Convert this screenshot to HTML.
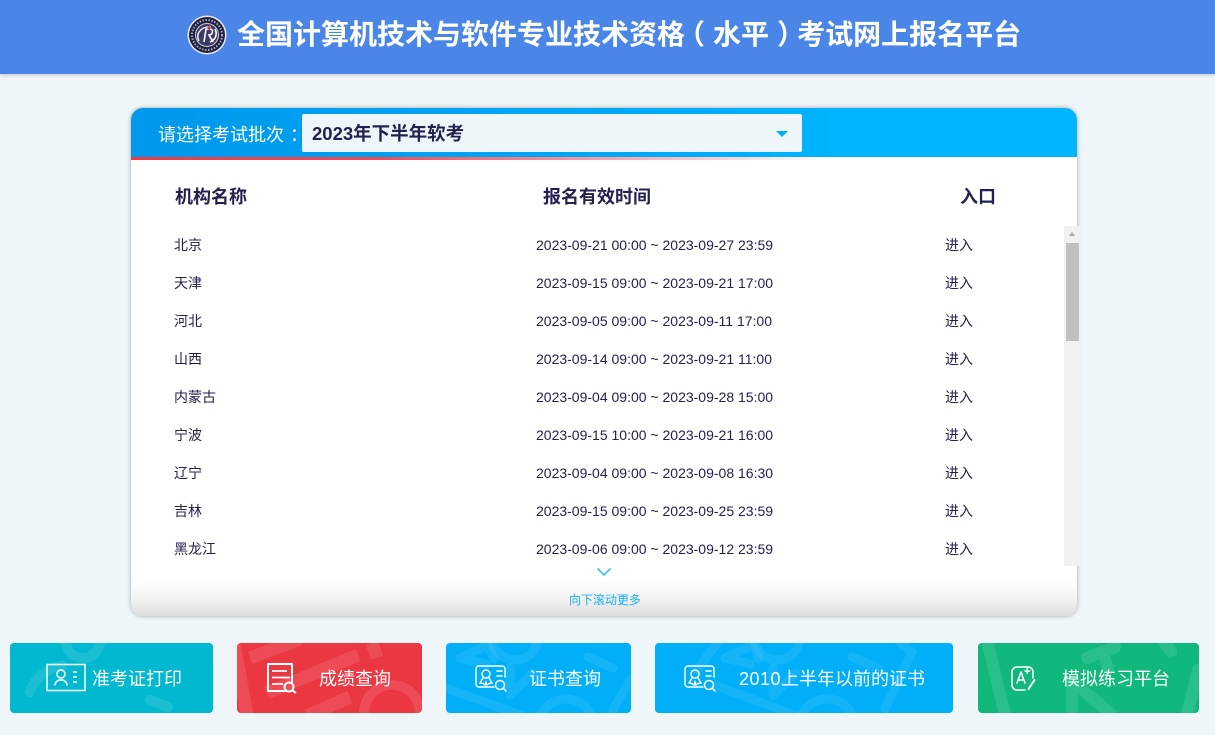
<!DOCTYPE html>
<html lang="zh-CN"><head><meta charset="utf-8"><title>全国计算机技术与软件专业技术资格(水平)考试网上报名平台</title>
<style>
*{box-sizing:border-box;margin:0;padding:0}
html,body{width:1215px;height:735px;overflow:hidden;background:#eff6f9;font-family:"Liberation Sans","Noto Sans CJK SC",sans-serif;color:#22214f}
#top{position:absolute;left:0;top:0;width:1215px;height:74px;background:#4a86e8;box-shadow:0 1px 4px rgba(0,0,0,.2)}
#title{position:absolute;left:237px;top:15px;font-size:28px;line-height:40px;font-weight:700;color:#fff;white-space:nowrap}
#title em,#lab em{font-style:normal;position:relative}
#card{position:absolute;left:131px;top:108px;width:946px;height:508px;background:#fff;border-radius:12px;box-shadow:0 0 4px rgba(0,0,0,.35);overflow:hidden}
#hd{position:absolute;left:0;top:0;width:946px;height:49px;background:linear-gradient(90deg,#0098ec 0,#00a8f6 50%,#00b4ff 75%,#00b4ff 100%)}
#red{position:absolute;left:0;top:49px;width:700px;height:3px;background:linear-gradient(90deg,#ec3a48 0,#ee4a58 35%,rgba(240,110,125,.8) 60%,rgba(255,255,255,0) 100%)}
#lab{position:absolute;left:27px;top:13px;font-size:18px;line-height:28px;color:#fff;white-space:nowrap}
#sel{position:absolute;left:171px;top:6px;width:500px;height:38px;background:#eef6f9;border-radius:2px}
#sel b{position:absolute;left:10px;top:6px;font-size:18.500px;line-height:28px;color:#22214f;white-space:nowrap}
#sel i{position:absolute;left:474px;top:17px;width:0;height:0;border-left:6px solid transparent;border-right:6px solid transparent;border-top:6px solid #00aef5}
.th{position:absolute;top:74px;font-size:18px;line-height:30px;font-weight:700;color:#22214f;white-space:nowrap}
.r{position:absolute;font-size:14px;line-height:20px;white-space:nowrap;color:#22214f}
.n{left:43px}.d{left:405px}.e{left:814px}
#fade{position:absolute;left:0;top:458px;width:946px;height:50px;background:linear-gradient(180deg,#fff 0,#fff 25%,#f3f3f3 65%,#dcdcdc 100%)}
#more{position:absolute;left:438px;top:483px;font-size:12px;line-height:18px;color:#18aef5;white-space:nowrap}
#sb{position:absolute;left:1064px;top:226px;width:17px;height:340px;background:#f1f1f1}
#sb u{position:absolute;left:2px;top:17px;width:13px;height:98px;background:#c0c0c0}
#sb s{position:absolute;left:5px;top:6px;width:0;height:0;border-left:3.500px solid transparent;border-right:3.500px solid transparent;border-bottom:4px solid #a5a5a5}
.b{position:absolute;top:643px;height:70px;border-radius:4px;overflow:hidden;color:#fff}
.b svg{position:absolute;left:0;top:0}
.b span{position:absolute;top:21px;font-size:18px;line-height:30px;color:#fff;white-space:nowrap;font-weight:400}
</style></head><body>
<div id="top">
<svg style="position:absolute;left:187px;top:15px" width="40" height="40" viewBox="0 0 40 40"><circle cx="20" cy="20" r="19.500" fill="#e9e9f0"/><circle cx="20" cy="20" r="18" fill="#20203f"/><circle cx="20" cy="20" r="11.500" fill="#3b3b68" stroke="#cfd0dd" stroke-width="1"/><path d="M12 26C8 18 15 11 24 12" fill="none" stroke="#fff" stroke-width="1.300"/><path d="M17 27l2-13h4c4 0 3 6-1 6l4 7M28 14c3 6 0 11-5 13" fill="none" stroke="#fff" stroke-width="1.600"/><path d="M20 13l2-2 2 2-2 2z" fill="#d93040"/><circle cx="20" cy="20" r="15" fill="none" stroke="#aab" stroke-width="2" stroke-dasharray="1.500 1.500"/></svg>
<div id="title">全国计算机技术与软件专业技术资格<em style="left:-8px">（</em>水平<em style="left:8px">）</em>考试网上报名平台</div>
</div>
<div id="card">
<div id="hd"></div><div id="red"></div>
<div id="lab">请选择考试批次<em style="left:6px">：</em></div>
<div id="sel"><b>2023年下半年软考</b><i></i></div>
<div class="th" style="left:44px">机构名称</div><div class="th" style="left:412px">报名有效时间</div><div class="th" style="left:829px">入口</div>
<div class="r n" style="top:127px">北京</div><div class="r d" style="top:127px">2023-09-21 00:00 ~ 2023-09-27 23:59</div><div class="r e" style="top:127px">进入</div>
<div class="r n" style="top:165px">天津</div><div class="r d" style="top:165px">2023-09-15 09:00 ~ 2023-09-21 17:00</div><div class="r e" style="top:165px">进入</div>
<div class="r n" style="top:203px">河北</div><div class="r d" style="top:203px">2023-09-05 09:00 ~ 2023-09-11 17:00</div><div class="r e" style="top:203px">进入</div>
<div class="r n" style="top:241px">山西</div><div class="r d" style="top:241px">2023-09-14 09:00 ~ 2023-09-21 11:00</div><div class="r e" style="top:241px">进入</div>
<div class="r n" style="top:279px">内蒙古</div><div class="r d" style="top:279px">2023-09-04 09:00 ~ 2023-09-28 15:00</div><div class="r e" style="top:279px">进入</div>
<div class="r n" style="top:317px">宁波</div><div class="r d" style="top:317px">2023-09-15 10:00 ~ 2023-09-21 16:00</div><div class="r e" style="top:317px">进入</div>
<div class="r n" style="top:355px">辽宁</div><div class="r d" style="top:355px">2023-09-04 09:00 ~ 2023-09-08 16:30</div><div class="r e" style="top:355px">进入</div>
<div class="r n" style="top:393px">吉林</div><div class="r d" style="top:393px">2023-09-15 09:00 ~ 2023-09-25 23:59</div><div class="r e" style="top:393px">进入</div>
<div class="r n" style="top:431px">黑龙江</div><div class="r d" style="top:431px">2023-09-06 09:00 ~ 2023-09-12 23:59</div><div class="r e" style="top:431px">进入</div>
<div id="fade"></div>
<svg style="position:absolute;left:465px;top:459px" width="16" height="11" viewBox="0 0 16 11"><path d="M1.500 1.500L8 8l6.500-6.500" fill="none" stroke="#3cc0f8" stroke-width="1.600"/></svg>
<div id="more">向下滚动更多</div>
</div>
<div id="sb"><s></s><u></u></div>
<div style="position:absolute;left:130px;top:626px;width:950px;height:1px;background:#f3f6f7"></div>

<div class="b" style="left:10px;width:203px;background:#00b8d0">
<svg width="203" height="70" fill="none" stroke="#fff" stroke-opacity=".1" stroke-linecap="round" stroke-width="10"><circle cx="73" cy="-2" r="17"/><path d="M20 49C24 36 36 26 52 22M140 57l18 7"/></svg>
<svg width="203" height="70" fill="none" stroke="#fff" stroke-opacity=".92"><rect x="37" y="21.500" width="38" height="26" stroke-width="1.600"/><circle cx="51" cy="31" r="4" stroke-width="1.700"/><path d="M45 42.500c0-7.500 12-7.500 12 0" stroke-width="1.700"/><path d="M63 29h4M63 34h4M63 39h4" stroke-width="1.800"/></svg>
<span style="left:82px">准考证打印</span></div>

<div class="b" style="left:237px;width:185px;background:#eb3742">
<svg width="185" height="70" fill="none" stroke="#fff" stroke-opacity=".1" stroke-width="13"><path d="M13 15L63 -4M30 50L121 12M70 73L113 54M-3 0L10 72M135 0l5 15"/><circle cx="155" cy="70" r="28" stroke-width="10"/></svg>
<svg width="185" height="70" fill="none" stroke="#fff"><path d="M50 48H31V21h24v19" stroke-width="2" stroke-linejoin="round"/><path d="M35 28h15M35 34.500h18M35 41h11" stroke-width="1.800"/><circle cx="52" cy="44" r="4.500" stroke-width="2"/><path d="M55.500 47.500L59 50" stroke-width="2"/></svg>
<span style="left:82px">成绩查询</span></div>

<div class="b" style="left:446px;width:185px;background:#00aff8">
<svg width="185" height="70" fill="none" stroke="#fff" stroke-opacity=".08" stroke-width="9" stroke-linejoin="round" stroke-linecap="round"><circle cx="69" cy="-6" r="23"/><path d="M14 15L42 2M42 2l6 14M14 15l26 6M64 25v27L87 30M0 45l77 28M142 14l25 11M167 67l17-30"/><circle cx="120" cy="84" r="28"/></svg>
<svg width="185" height="70" fill="none" stroke="#fff" stroke-width="1.400" stroke-linecap="round"><path d="M48 44H33a3 3 0 0 1-3-3V26a3 3 0 0 1 3-3h23a3 3 0 0 1 3 3v8"/><circle cx="40" cy="31" r="4"/><path d="M37 35l-3 5 3 .5 2 1.500 1-3 1 3 2-1.500 3-.5-3-5M51 28h5M51 33h5"/><circle cx="54" cy="42" r="4.500" stroke-width="1.500"/><path d="M57 45l3 3" stroke-width="1.500"/></svg>
<span style="left:83px">证书查询</span></div>

<div class="b" style="left:655px;width:298px;background:#00aff8">
<svg width="298" height="70" fill="none" stroke="#fff" stroke-opacity=".08" stroke-width="9" stroke-linejoin="round" stroke-linecap="round"><circle cx="122" cy="-6" r="23"/><path d="M70 15L98 2M98 2l6 14M70 15l26 6M118 25v27L141 30M62 43l80 30M197 14l26 11M245 0l12 9-27 57M42 27L62 0"/><circle cx="172" cy="84" r="28"/></svg>
<svg width="298" height="70" fill="none" stroke="#fff" stroke-width="1.400" stroke-linecap="round"><path d="M48 44H33a3 3 0 0 1-3-3V26a3 3 0 0 1 3-3h23a3 3 0 0 1 3 3v8"/><circle cx="40" cy="31" r="4"/><path d="M37 35l-3 5 3 .5 2 1.500 1-3 1 3 2-1.500 3-.5-3-5M51 28h5M51 33h5"/><circle cx="54" cy="42" r="4.500" stroke-width="1.500"/><path d="M57 45l3 3" stroke-width="1.500"/></svg>
<span style="left:84px"><i style="font-style:normal;letter-spacing:.5px">2010</i>上半年以前的证书</span></div>

<div class="b" style="left:978px;width:221px;background:#10b97b">
<svg width="221" height="70" fill="none" stroke="#fff" stroke-opacity=".1" stroke-width="12" stroke-linejoin="round" stroke-linecap="round"><path d="M9 -3L27 72M109 15L137 4M125 8l5 18M94 38v34M94 38l40 34M187 0l6 8M220 27l-11 45"/></svg>
<svg width="221" height="70" fill="none" stroke="#fff" stroke-width="1.600" stroke-linecap="round" stroke-linejoin="round"><path d="M47 47H39a5 5 0 0 1-5-5V29a5 5 0 0 1 5-5h11a5 5 0 0 1 5 5v6"/><path d="M39 40l4-11 4 11M40.500 37h5M47 28h4.500M49.200 25.700v4.500" stroke-width="1.500"/><path d="M50.500 46l6-9" stroke-width="2"/></svg>
<span style="left:84px">模拟练习平台</span></div>
</body></html>
